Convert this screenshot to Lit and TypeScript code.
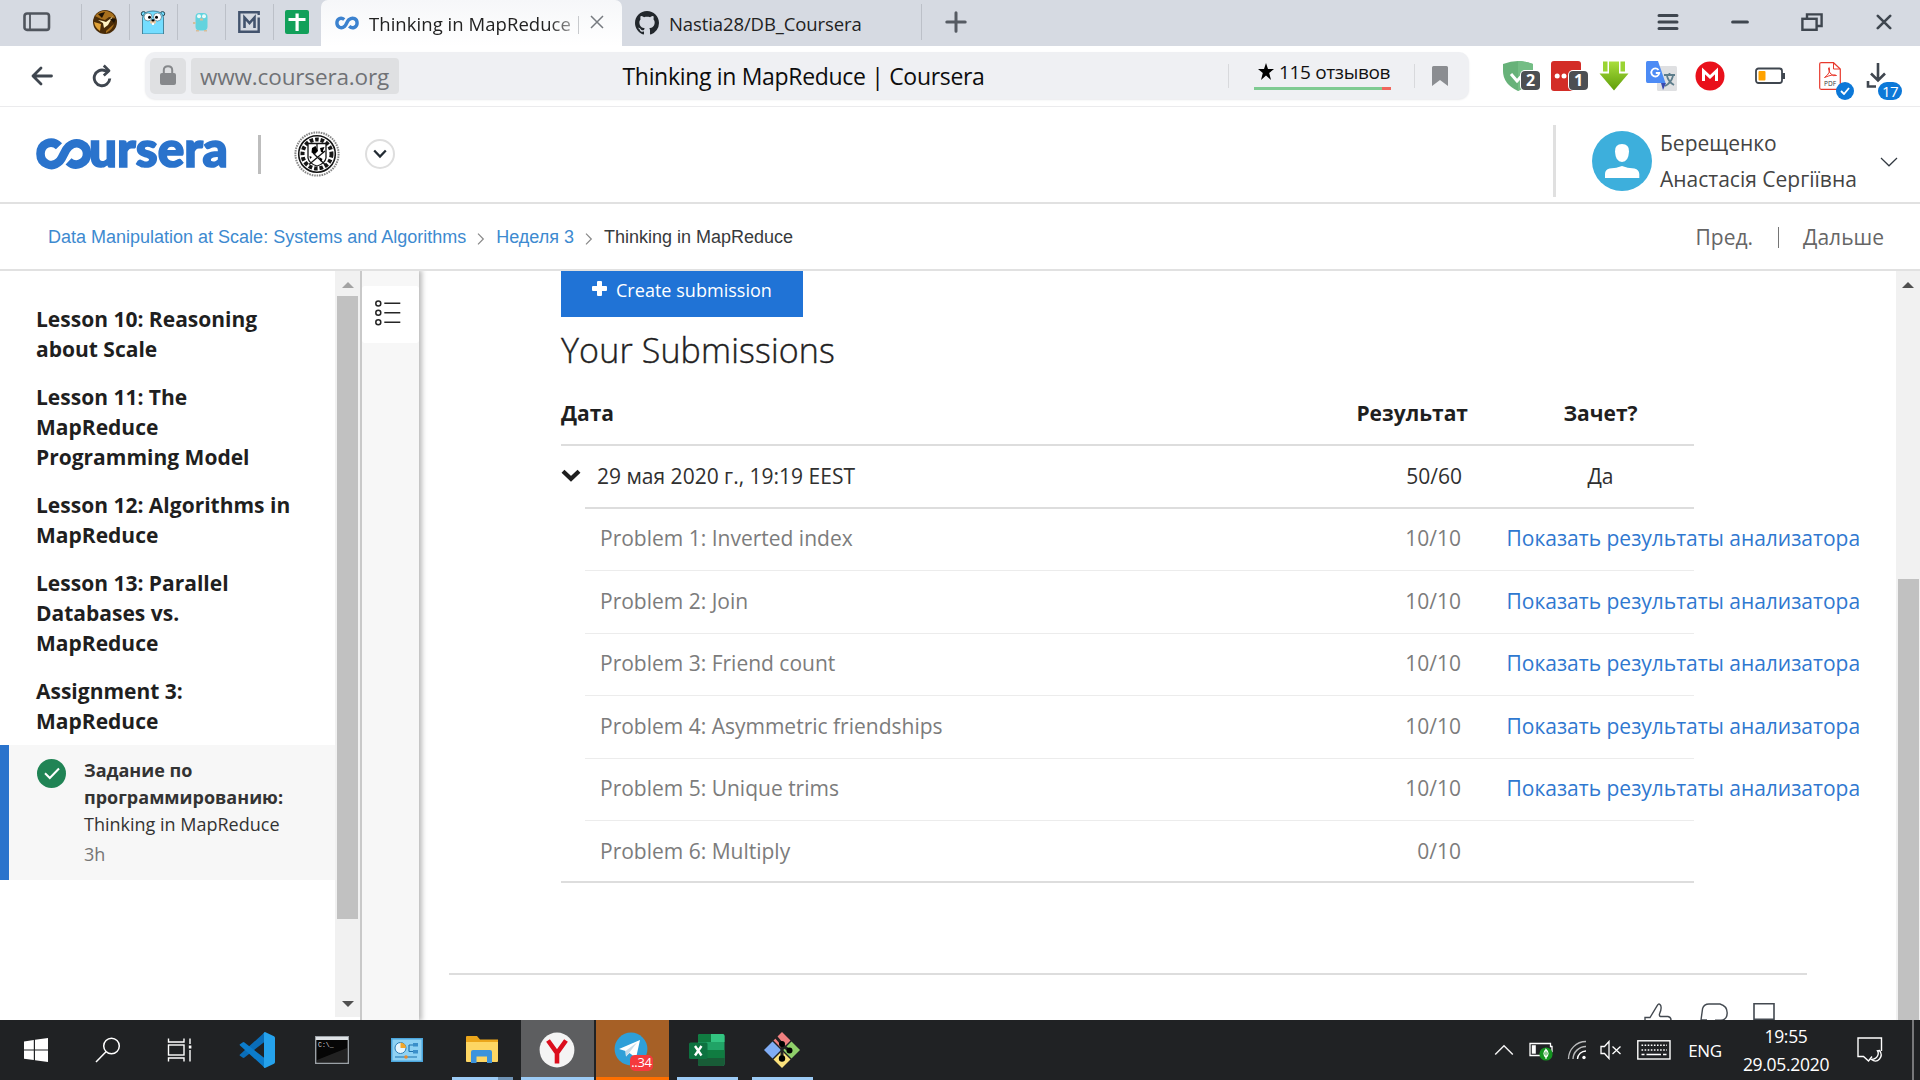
import { LitElement, html, css } from "lit";
import { customElement } from "lit/decorators.js";

/* ---------- icons ---------- */
const panelIcon = html`<svg width="28" height="20" viewBox="0 0 28 20" fill="none" stroke="#50555d" stroke-width="2.6"><rect x="1.5" y="1.5" width="24.5" height="16.4" rx="2.5"/><path d="M7 2v16" stroke-width="1.8"/></svg>`;
const emblemIcon = html`<svg width="24" height="24" viewBox="0 0 24 24"><circle cx="12" cy="12" r="12" fill="#4a2c08"/><path d="M2 6Q7 0 14 1Q21 3 22 8L16 7L12 10L8 9Z" fill="#a8701d"/><path d="M1 12L8 14L7 21Q2 18 1 12Z" fill="#e0a238"/><path d="M13 21L21 14Q20 19 13 23Z" fill="#a8701d"/><path d="M5 10L10 11L13 12L17 9L20 6L15 15L11 18L10 13Z" fill="#fff3c4"/><path d="M5 4L12 2L9 8Z" fill="#1d1205"/><path d="M17 9L23 9L21 13Z" fill="#1d1205"/></svg>`;
const gopherIcon = html`<svg width="26" height="24" viewBox="0 0 26 24"><circle cx="3.500" cy="3.800" r="2.200" fill="#74ddff" stroke="#26404a"/><circle cx="22.500" cy="3.800" r="2.200" fill="#74ddff" stroke="#26404a"/><path d="M2.500 24V8Q3 1 13 1T23.500 8V24Z" fill="#74ddff" stroke="#2d6f87" stroke-width=".8"/><circle cx="8" cy="7" r="4" fill="#fff" stroke="#35606e" stroke-width=".6"/><circle cx="17.5" cy="7" r="4" fill="#fff" stroke="#35606e" stroke-width=".6"/><circle cx="9.5" cy="7.2" r="1.5"/><circle cx="16.5" cy="7.2" r="1.5"/><ellipse cx="13" cy="12" rx="3" ry="2" fill="#e8c8a2"/><ellipse cx="13" cy="10.4" rx="1.6" ry="1.1"/><path d="M12 13h2v2h-2z" fill="#fff"/></svg>`;
const smallGopherIcon = html`<svg width="16" height="20" viewBox="0 0 16 20"><rect x="2.5" y="1" width="12" height="17.5" rx="4" fill="#63d3de"/><circle cx="6" cy="4.2" r="2" fill="#e9fafa"/><circle cx="11" cy="4.2" r="2" fill="#e9fafa"/><path d="M7 6.5h3v2H7z" fill="#d7bd98"/><path d="M0 10h2.5v2H0zM3 18h3v1.5H3zM11 18h3v1.5h-3z" fill="#d7bd98"/></svg>`;
const mIcon = html`<svg width="22" height="22" viewBox="0 0 22 22" fill="none" stroke="#43536d"><path d="M20.700 4V1.300H1.300V20.700H20.700V6.500" stroke-width="2.4"/><path d="M6.500 17V6.500L11.500 12L16.500 6.500V17" stroke-width="2.600"/></svg>`;
const crossDocIcon = html`<svg width="24" height="24" viewBox="0 0 24 24"><rect width="24" height="24" rx="2" fill="#12a05a"/><path d="M10.5 3.5h3.2V8h6.8v3h-6.8v10h-3.2V11H3.5V8h7z" fill="#fff"/></svg>`;
const infinityIcon = html`<svg width="24" height="14" viewBox="0 0 24 14" fill="none" stroke="#3c82cf" stroke-width="3.4"><path d="M9.3 3.5C5.500 .4 1.900 3.300 1.900 7S6 13.400 9.600 10.400C12 8 11.500 6 14 3.600C18 .5 22.100 3 22.100 7S17.500 13.500 14.200 10.200"/></svg>`;
const githubIcon = html`<svg width="24" height="24" viewBox="0 0 16 16" fill="#22272c"><path d="M8 0C3.580 0 0 3.580 0 8c0 3.540 2.290 6.530 5.470 7.590.4.070.55-.17.55-.38 0-.19-.01-.82-.01-1.490-2.010.37-2.530-.49-2.690-.94-.09-.23-.48-.94-.82-1.130-.28-.15-.68-.52-.01-.53.63-.01 1.080.58 1.230.82.72 1.210 1.870.87 2.330.66.070-.52.28-.87.51-1.070-1.780-.2-3.640-.89-3.640-3.950 0-.87.31-1.590.82-2.150-.08-.2-.36-1.020.08-2.120 0 0 .67-.21 2.200.82.64-.18 1.320-.27 2-.27s1.360.09 2 .27c1.530-1.040 2.200-.82 2.200-.82.44 1.100.16 1.920.08 2.120.51.56.82 1.270.82 2.150 0 3.070-1.870 3.750-3.650 3.950.29.25.54.73.54 1.480 0 1.070-.01 1.930-.01 2.200 0 .21.15.46.55.38A8.010 8.010 0 0016 8c0-4.420-3.580-8-8-8z"/></svg>`;
const plusIcon = html`<svg width="22" height="22" viewBox="0 0 22 22" stroke="#565b63" stroke-width="3" stroke-linecap="round"><path d="M11 1.800V20.200M1.800 11H20.200"/></svg>`;
const tabCloseIcon = html`<svg width="14" height="14" viewBox="0 0 14 14" stroke="#777b80" stroke-width="1.500"><path d="M1 1L13 13M13 1L1 13"/></svg>`;
const menuIcon = html`<svg width="22" height="18" viewBox="0 0 22 18" stroke="#3f464f" stroke-width="3" stroke-linecap="round"><path d="M2 2.500H20M2 9H20M2 15.500H20"/></svg>`;
const minIcon = html`<svg width="18" height="18" viewBox="0 0 18 18" stroke="#3f464f" stroke-width="3" stroke-linecap="round"><path d="M1.600 9H16.400"/></svg>`;
const restoreIcon = html`<svg width="22" height="18" viewBox="0 0 22 18" fill="none" stroke="#3f464f" stroke-width="2.400"><rect x="1.400" y="5.800" width="14.200" height="11"/><path d="M6 5.500V1.400H20.600V13H16"/></svg>`;
const winCloseIcon = html`<svg width="16" height="16" viewBox="0 0 16 16" stroke="#3f464f" stroke-width="2.600" stroke-linecap="round"><path d="M1.800 1.800L14.200 14.200M14.200 1.800L1.800 14.200"/></svg>`;
const backIcon = html`<svg width="22" height="20" viewBox="0 0 22 20" fill="none" stroke="#3f464f" stroke-width="2.800" stroke-linecap="round" stroke-linejoin="round"><path d="M20.500 10H2M10 2L2 10L10 18"/></svg>`;
const reloadIcon = html`<svg width="20" height="24" viewBox="0 0 20 24" fill="none" stroke="#3f464f" stroke-width="2.900" stroke-linejoin="round"><path d="M17.800 14.500A7.800 7.800 0 1 1 13 6.700H17"/><path d="M11.800 1.500L17 6.700L11.800 11.500" stroke-width="2.700"/></svg>`;
const lockIcon = html`<svg width="16" height="20" viewBox="0 0 16 20"><rect y="8" width="16" height="12" rx="2" fill="#86888b"/><path d="M3.800 9V5Q3.800 1.200 8 1.200T12.200 5V9" fill="none" stroke="#86888b" stroke-width="2"/></svg>`;
const starIcon = html`<svg width="16" height="17" viewBox="0 0 16 17"><path d="M8 0L10 6H16L11.200 10L13 17L8 12.600L3 17L4.800 10L0 6H6Z"/></svg>`;
const bookmarkIcon = html`<svg width="16" height="20" viewBox="0 0 16 20"><path d="M0 1.500Q0 0 1.500 0H14.500Q16 0 16 1.500V20L8 14L0 20Z" fill="#8b8d91"/></svg>`;
const shieldIcon = html`<svg width="30" height="30" viewBox="0 0 30 30"><path d="M0 3Q8 0 15 0T30 3V10Q30 23 15 30Q0 23 0 10Z" fill="#67b279"/><path d="M15 0Q22 0 30 3V10Q30 23 15 30Z" fill="#74bd85"/><path d="M8 13L14 20L23 10" fill="none" stroke="#fff" stroke-width="3"/></svg>`;
const lastpassIcon = html`<svg width="30" height="30" viewBox="0 0 30 30"><rect width="30" height="30" rx="3" fill="#d32d27"/><circle cx="6.200" cy="15" r="2.500" fill="#fff"/><circle cx="13" cy="15" r="2.500" fill="#fff"/></svg>`;
const saveFromIcon = html`<svg width="30" height="30" viewBox="0 0 30 30"><defs><linearGradient id="sf" x2="0" y2="1"><stop stop-color="#a9de3c"/><stop offset="1" stop-color="#5f9d0a"/></linearGradient></defs><path d="M10 .5H20V12.500H29.500L15 29.500L.5 12.500H10Z" fill="url(#sf)"/><path d="M4 .5H8.500V10.500H4zM21.500 .5H26V10.500H21.500z" fill="#9ad433"/></svg>`;
const translateIcon = html`<svg width="32" height="30" viewBox="0 0 32 30"><rect x="11" y="5" width="20" height="25" rx="1.500" fill="#dfe0e2"/><path d="M18 14H29M23.500 12V14M21 15Q22.500 21 28 24M27 15Q25 22 19 25" stroke="#5d7d8b" stroke-width="1.800" fill="none"/><path d="M1.500 0H12L19.500 22H1.500Q0 22 0 20V1.500Q0 0 1.500 0Z" fill="#4c8bf5"/><path d="M15 22H20L17 29Z" fill="#3a4ab0"/><path d="M12.500 9A4 4 0 1 0 13.300 12H9.800" fill="none" stroke="#fff" stroke-width="1.800"/></svg>`;
const megaIcon = html`<svg width="30" height="30" viewBox="0 0 30 30"><circle cx="15" cy="15" r="14.500" fill="#e9101b"/><path d="M8.500 20V10L15 16L21.500 10V20" fill="none" stroke="#fff" stroke-width="3"/></svg>`;
const batteryIcon = html`<svg width="30" height="18" viewBox="0 0 30 18"><rect x="1" y="1.500" width="26" height="14.500" rx="2.500" fill="none" stroke="#3f464f" stroke-width="1.800"/><path d="M27 6h3v6h-3z" fill="#3f464f"/><rect x="3.500" y="4" width="7" height="9.500" rx="1" fill="#ffa200"/></svg>`;
const pdfIcon = html`<svg width="22" height="28" viewBox="0 0 22 28"><path d="M1.500 .7H14.500L21.300 7V25.800Q21.300 27.300 19.800 27.300H2.200Q.7 27.300 .7 25.800V2Q.7 .7 2 .7Z" fill="#fff" stroke="#e8392d" stroke-width="1.200"/><path d="M14.500 1V7H21" fill="none" stroke="#e8392d"/><path d="M5.500 15.500Q12 11 10.200 5.500Q8.500 6 11 11Q14 15 17.500 13.500Q15 11.500 5.500 15.500Z" fill="none" stroke="#e8392d"/><text x="11" y="24" font-size="6.500" font-family="Open Sans, sans-serif" fill="#333" text-anchor="middle">PDF</text></svg>`;
const downloadIcon = html`<svg width="24" height="28" viewBox="0 0 24 28" fill="none" stroke="#3f464f" stroke-width="2.600"><path d="M12 1V18M5 11.500L12 18.500L19 11.500"/><path d="M2 19V24.500H10"/></svg>`;
const thinChevron = html`<svg width="18" height="10" viewBox="0 0 18 10" fill="none" stroke="#333a42" stroke-width="1.200"><path d="M1 1L9 8.800L17 1"/></svg>`;
const crumbArrow = html`<svg class="arrow" width="8" height="12" viewBox="0 0 8 12" fill="none" stroke="#888" stroke-width="1.200"><path d="M1 .7L6.300 6L1 11.300"/></svg>`;
const avatarIcon = html`<svg width="60" height="60" viewBox="0 0 60 60"><circle cx="30" cy="30" r="30" fill="#3dafdc"/><path d="M30 13Q37.300 13 37 20.500Q36.500 31 30 31T23 20.500Q22.700 13 30 13Z" fill="#fff"/><path d="M13 47V43Q13 38.500 17.500 37.500Q25 37 30 35Q35 37 42.500 37.500Q47 38.500 47.300 43V47Z" fill="#fff"/></svg>`;
const listIcon = html`<svg width="26" height="26" viewBox="0 0 26 26" fill="none" stroke="#252525" stroke-width="1.500"><circle cx="3.300" cy="3.500" r="2.500"/><circle cx="3.300" cy="12.700" r="2.500"/><circle cx="3.300" cy="22.200" r="2.500"/><path d="M9.300 3.300H25.300M9.300 12.700H25.300M9.300 22.200H25.300"/></svg>`;
const checkIcon = html`<svg width="30" height="30" viewBox="0 0 30 30"><circle cx="14.500" cy="14.500" r="14.500" fill="#208455"/><path d="M8 14.300L12.800 19L22 9.500" fill="none" stroke="#fff" stroke-width="2"/></svg>`;
const whitePlus = html`<svg width="15" height="15" viewBox="0 0 15 15" fill="#fff"><rect x="5" width="5" height="15" rx="1"/><rect y="5" width="15" height="5" rx="1"/></svg>`;
const boldChevron = html`<svg width="20" height="14" viewBox="0 0 20 14" fill="none" stroke="#1f1f1f" stroke-width="4.200"><path d="M2 2.200L10 9.800L18 2.200"/></svg>`;
const likeIcon = html`<svg width="28" height="30" viewBox="0 0 28 30" fill="none" stroke="#434950" stroke-width="1.400"><path d="M1 29V14.500H6L13.500 2.200Q14.500 .3 16 1.500Q18.500 4 15.500 11Q15 13 16.500 13.500H24Q27 14 27 17V29"/></svg>`;
const bubbleIcon = html`<svg width="28" height="30" viewBox="0 0 28 30" fill="none" stroke="#434950" stroke-width="1.400"><path d="M1 17L2.600 5.500Q4 1 9 1H20Q27.200 3 27.200 10Q27 17 21 17.200H15M1 17H7"/></svg>`;
const flagIcon = html`<svg width="22" height="30" viewBox="0 0 22 30" fill="none" stroke="#434950" stroke-width="1.600"><path d="M1 30V.8H21V16.200H1"/></svg>`;

const winIcon = html`<svg width="24" height="24" viewBox="0 0 24 24" fill="#fff"><path d="M0 3.500L9.800 2V11.500H0zM11 1.800L24 0V11.500H11zM0 12.600H9.800V22L0 20.700zM11 12.600H24V24L11 22.200z"/></svg>`;
const searchIcon = html`<svg width="26" height="26" viewBox="0 0 26 26" fill="none" stroke="#fff" stroke-width="1.500"><circle cx="16.500" cy="9" r="7.800"/><path d="M11 14.800L1 25"/></svg>`;
const taskViewIcon = html`<svg width="26" height="24" viewBox="0 0 26 24" fill="none" stroke="#fff" stroke-width="1.400"><path d="M1.500 .5V4H17V.5M1.500 23.500V20H17V23.500M23 .5V6M23 12V23.500"/><rect x="1.500" y="7" width="15.500" height="10"/><path d="M21.800 7.500h2.600v3h-2.600z" fill="#fff" stroke="none"/></svg>`;
const codeIcon = html`<svg width="36" height="36" viewBox="0 0 36 36"><path d="M1 22.500L26 0V9.500L5.500 25.500Q4.500 26.300 3.500 25.500L1 23.800Q.2 23.200 1 22.500Z" fill="#0a6db8"/><path d="M1 13.500L26 36V26.500L5.500 10.500Q4.500 9.700 3.500 10.500L1 12.200Q.2 12.800 1 13.500Z" fill="#0c7ccb"/><path d="M26 0L35 4.200Q36 4.700 36 6V30Q36 31.300 35 31.800L26 36Q24 35.500 25 33V3Q24 .5 26 0Z" fill="#25a2ec"/></svg>`;
const cmdIcon = html`<svg width="34" height="28" viewBox="0 0 34 28"><rect x=".7" y=".7" width="32.600" height="26.600" fill="#060606" stroke="#9ba1a6" stroke-width="1.400"/><rect x="1" y="1" width="32" height="3" fill="#dfe3e6"/><path d="M2 24L32 12V26H2z" fill="#222"/><text x="3" y="11" font-size="6.500" fill="#ddd" font-family="Liberation Mono, monospace">C:\\_</text></svg>`;
const panelCtlIcon = html`<svg width="32" height="24" viewBox="0 0 32 24"><rect width="32" height="24" fill="#4ba6dc"/><rect x="1.500" y="1.500" width="29" height="21" fill="#8fd2f4"/><circle cx="9.500" cy="10" r="5.500" fill="#e6f5fd" stroke="#2c7db4"/><path d="M9.500 10V4.500A5.500 5.500 0 0 1 15 10z" fill="#f3a72b"/><path d="M22 5h5v3.500h-5zM22 12h5v3.500h-5z" fill="#3b8fca"/><path d="M18 7h4M18 13.500h4M18 7v6.500M4 19H26" stroke="#1f72ae" stroke-width="1.200" fill="none"/><circle cx="15" cy="19" r="1.800" fill="#e8892b"/></svg>`;
const explorerIcon = html`<svg width="34" height="28" viewBox="0 0 34 28"><path d="M1 1Q1 0 2 0H12L15 3.500H33V24H1z" fill="#eba61b"/><path d="M1 6H33V25Q33 26 32 26H2Q1 26 1 25z" fill="#fdd663"/><path d="M6 16Q6 14 8 14H25Q27 14 27 16V27H22V20.500H11.500V27H6z" fill="#3b93dc"/></svg>`;
const yandexIcon = html`<svg width="36" height="36" viewBox="0 0 36 36"><circle cx="18" cy="18" r="17.400" fill="#f4f4f4"/><path d="M9 8.500L18 21L27 8.500M18 20V31.500" fill="none" stroke="#dc0e1d" stroke-width="4.600"/></svg>`;
const telegramIcon = html`<svg width="38" height="38" viewBox="0 0 38 38"><circle cx="18" cy="18" r="16.400" fill="#2f9fd8"/><path d="M6 18L27 9L23 27L16.500 22L13 25.500L12.500 20Z" fill="#fff"/><path d="M12.500 20L24 11.500L16 22L13 25.500Z" fill="#c8dbe9"/></svg>`;
const excelIcon = html`<svg width="36" height="32" viewBox="0 0 36 32"><rect x="9" width="26.500" height="32" rx="2" fill="#21a366"/><path d="M9 8H22V0H11Q9 0 9 2zM9 16h13v8H9z" fill="#107c41"/><path d="M22 0H33.500Q35.500 0 35.500 2V8H22z" fill="#33c481"/><path d="M22 16h13.500v8H22z" fill="#107c41"/><path d="M9 24h26.500v6q0 2-2 2H11q-2 0-2-2z" fill="#185c37"/><rect y="8.500" width="18.500" height="16.500" rx="1.500" fill="#0d7240"/><path d="M6 12L12.500 21.500M12.500 12L6 21.500" stroke="#fff" stroke-width="2.400"/></svg>`;
const gitIcon = html`<svg width="36" height="36" viewBox="0 0 36 36"><path d="M18 0L26.500 8.500L18 17L9.500 8.500Z" fill="#f08080"/><path d="M27.500 9.500L36 18L27.500 26.500L19 18Z" fill="#8fd06a"/><path d="M8.500 9.500L17 18L8.500 26.500L0 18Z" fill="#80adf5"/><path d="M18 19L26.500 27.500L18 36L9.500 27.500Z" fill="#fbe27c"/><path d="M12 5L18 12V27M18 13L26 19" fill="none" stroke="#222" stroke-width="3"/><circle cx="18" cy="12" r="3"/><circle cx="18" cy="26.500" r="3.200"/><circle cx="25.500" cy="18.500" r="3"/></svg>`;

const caretUp = html`<svg width="20" height="12" viewBox="0 0 20 12" fill="none" stroke="#f2f2f2" stroke-width="1.500"><path d="M1.200 10.500L10 1.800L18.800 10.500"/></svg>`;
const trayBattery = html`<svg width="24" height="22" viewBox="0 0 24 22"><path d="M1 4.500H21.500V7.500H23V12.500H21.500V16.500H1z" fill="none" stroke="#fff" stroke-width="1.300"/><path d="M2.800 6.200h4v8.500h-4z" fill="#fff"/><circle cx="17" cy="15" r="6.600" fill="#149420"/><path d="M17 10.500Q12.800 14.500 17 18.500Q21.200 14.500 17 10.500V20" fill="none" stroke="#fff" stroke-width="1.100"/></svg>`;
const wifiIcon = html`<svg width="20" height="20" viewBox="0 0 20 20" fill="none" stroke="#b9babb" stroke-width="1.400"><path d="M1.500 19A17.500 17.500 0 0 1 19 1.500"/><path d="M6 19A13 13 0 0 1 19 6.500"/><path d="M10.500 19A8.500 8.500 0 0 1 19 11" stroke="#fff"/><circle cx="17" cy="17.500" r="1.700" fill="#fff" stroke="none"/></svg>`;
const muteIcon = html`<svg width="22" height="20" viewBox="0 0 22 20" fill="none" stroke="#fff" stroke-width="1.300"><path d="M1 6.500H4.500L9 1.500V18.500L4.500 13.500H1z"/><path d="M12.500 6.500L20.500 14M20.500 6.500L12.500 14"/></svg>`;
const keyboardIcon = html`<svg width="34" height="20" viewBox="0 0 34 20" fill="none" stroke="#fff" stroke-width="1.400"><rect x=".8" y=".8" width="32.200" height="18.200"/><path d="M4.500 5.200H30M4.500 10H30" stroke-dasharray="1.600 1.500"/><path d="M4.500 14.500H7.500M9.500 14.500H24M26 14.500H29.500"/></svg>`;
const noticeIcon = html`<svg width="26" height="26" viewBox="0 0 26 26" fill="none" stroke="#fff" stroke-width="1.400"><path d="M15 19.500L11.500 24L6.500 19.500H1V1H24.500V14"/><path d="M22.500 13.500Q26 18 22.500 22T14.500 22.500Q19 22 20.500 19T20.500 13.800Z"/></svg>`;

/* Round seal of the university shown next to the wordmark. */
const sealIcon = html`<svg width="46" height="46" viewBox="0 0 46 46"><circle cx="23" cy="23" r="21.600" fill="none" stroke="#888" stroke-width="2" stroke-dasharray="1.600 .9"/><circle cx="23" cy="23" r="18.300" fill="#fff" stroke="#161616" stroke-width="1.600"/><circle cx="23" cy="23" r="14.500" fill="none" stroke="#161616" stroke-width="4" stroke-dasharray="3.600 1.900"/><path d="M14 12.500H32V27Q31 32.500 23 35Q15 32.500 14 27Z" fill="#fff" stroke="#161616" stroke-width="1.300"/><path d="M15 33.500L31 20M31 33.500L19 22M23 13V20" stroke="#161616" stroke-width="1.300"/><path d="M17.500 21.500L18 17L21.500 15L24 20L21 23zM26 17L30.500 16L29 19.500L30 22L27 21zM15.500 25L18 26L16 28zM25 26L28.500 28L27 31z"/></svg>`;

const wordmark = html`<svg width="194" height="34" viewBox="0 0 194 34" overflow="visible"><path d="M23 9.500C15.500 2 4.500 7 4.500 17S16 32 23.500 24.500C28 19.500 28 14 33 9.500C41 3 51 8 51 17S40 31.500 32.500 24.500" transform="translate(0 -1.200)" fill="none" stroke="#2a73cc" stroke-width="8.600"/><text x="53" y="28.800" font-family="Lato, sans-serif" font-weight="900" font-size="50" fill="#2a73cc" stroke="#2a73cc" stroke-width="1.700" textLength="139" lengthAdjust="spacingAndGlyphs">ursera</text></svg>`;

const LESSONS = [
  ["Lesson 10: Reasoning", "about Scale"],
  ["Lesson 11: The", "MapReduce", "Programming Model"],
  ["Lesson 12: Algorithms in", "MapReduce"],
  ["Lesson 13: Parallel", "Databases vs.", "MapReduce"],
  ["Assignment 3:", "MapReduce"],
];

const PROBLEMS = [
  { name: "Problem 1: Inverted index", score: "10/10", link: true },
  { name: "Problem 2: Join", score: "10/10", link: true },
  { name: "Problem 3: Friend count", score: "10/10", link: true },
  { name: "Problem 4: Asymmetric friendships", score: "10/10", link: true },
  { name: "Problem 5: Unique trims", score: "10/10", link: true },
  { name: "Problem 6: Multiply", score: "0/10", link: false },
];

const base = css`
  * { box-sizing: border-box; }
  svg { display: block; flex: none; }
`;

@customElement("browser-chrome")
export class BrowserChrome extends LitElement {
  static styles = [base, css`
    :host { display: block; font-family: "Open Sans", sans-serif; flex: none; height: 107px; border-bottom: 1px solid #ebebed; background: #fff; }
    .tabs { display: flex; height: 46px; background: #d6dae2; }
    .cell { display: flex; align-items: center; justify-content: center; width: 48px; height: 44px; flex: none; }
    .cell.first { width: 81px; padding-right: 8px; }
    .cell.new { width: 92px; padding-right: 22px; }
    .cell.win { width: 72px; }
    .sep { border-left: 1px solid #bcc0c8; height: 36px; margin-top: 4px; width: 0; margin-right: -1px; flex: none; }
    .tab { display: flex; align-items: center; height: 46px; font-size: 18.5px; color: #222; white-space: nowrap; }
    .active { width: 301px; background: linear-gradient(#f6f7f9, #fff); border-radius: 7px 7px 0 0; padding-left: 14px; letter-spacing: .05px; }
    .label { width: 204px; flex: none; margin-left: 10px; -webkit-mask-image: linear-gradient(90deg, #000 88%, rgba(0,0,0,.4)); }
    .tab .bar { width: 1px; height: 18px; background: #c8cacd; margin: 4px 11px 0 5px; }
    .other { width: 299px; padding-left: 13px; letter-spacing: -0.100px; }
    .other span { margin-left: 10px; }
    .active svg:last-child { margin-top: -2px; }
    .spacer { flex: 1; }
    .tools { display: flex; height: 60px; padding-right: 18px; align-items: flex-start; }
    .nav { display: flex; align-items: center; width: 145px; height: 60px; padding-left: 31px; }
    .nav svg + svg { margin-left: 39px; }
    .field { display: flex; align-items: center; width: 1324px; height: 47px; margin-top: 6px; background: #eff0f3; border-radius: 10px; padding-left: 5px; box-shadow: 0 1px 2px #e9eaec; }
    .lock { width: 36px; height: 36px; border-radius: 5px; background: #dfe0e2; display: flex; justify-content: center; align-items: center; padding-bottom: 2px; }
    .url { width: 208px; height: 36px; margin-left: 5px; border-radius: 4px; background: #dfe0e2; color: #707276; font-size: 22.500px; line-height: 38px; padding-left: 9px; letter-spacing: -0.15px; }
    .title { margin-left: 223.500px; width: 605.500px; font-size: 23px; line-height: 36px; padding-top: 1px; letter-spacing: -0.320px; color: #0d0d0d; white-space: nowrap; }
    .line { width: 1px; height: 24px; background: #d8d9dc; }
    .reviews { width: 137px; margin: 0 23px 0 25px; height: 29px; margin-top: -1px; border-bottom: 3px solid #7fcb92; border-image: linear-gradient(90deg, #7fcb92 93%, #f0665c 93%) 1; display: flex; align-items: center; padding: 0 0 4px 4px; font-size: 19px; white-space: nowrap; letter-spacing: -0.35px; color: #111; }
    .reviews span { margin-left: 5px; }
    .mark { margin-left: 17px; }
    .ext { position: relative; display: flex; width: 48px; height: 60px; align-items: center; justify-content: center; }
    .ext.wide { width: 72px; }
    .exts { display: flex; margin-left: 25px; }
    .count { position: absolute; right: 2px; bottom: 16px; min-width: 19px; height: 19px; border-radius: 4px; background: #4c4f53; color: #fff; font-size: 16px; font-weight: 700; line-height: 18px; text-align: center; box-shadow: 0 0 0 1px #fff; }
    .tick, .seventeen { position: absolute; border-radius: 10px; background: #0c78d8; color: #fff; height: 18px; bottom: 6px; display: flex; align-items: center; justify-content: center; font-size: 15px; }
    .tick { width: 18px; right: 0; }
    .seventeen { width: 24px; right: 0; letter-spacing: -0.5px; }
  `];
  render() {
    return html`
      <div class="tabs">
        <div class="cell first">${panelIcon}</div>
        ${[emblemIcon, gopherIcon, smallGopherIcon, mIcon, crossDocIcon].map((i) => html`<div class="sep"></div><div class="cell">${i}</div>`)}
        <div class="tab active">${infinityIcon}<span class="label">Thinking in MapReduce</span><i class="bar"></i>${tabCloseIcon}</div>
        <div class="tab other">${githubIcon}<span>Nastia28/DB_Coursera</span></div>
        <div class="sep"></div>
        <div class="cell new">${plusIcon}</div>
        <div class="spacer"></div>
        ${[menuIcon, minIcon, restoreIcon, winCloseIcon].map((i) => html`<div class="cell win">${i}</div>`)}
      </div>
      <div class="tools">
        <div class="nav">${backIcon}${reloadIcon}</div>
        <div class="field">
          <div class="lock">${lockIcon}</div>
          <div class="url">www.coursera.org</div>
          <div class="title">Thinking in MapReduce | Coursera</div>
          <div class="line"></div>
          <div class="reviews">${starIcon}<span>115 отзывов</span></div>
          <div class="line"></div>
          <div class="mark">${bookmarkIcon}</div>
        </div>
        <div class="exts">
          <div class="ext">${shieldIcon}<span class="count">2</span></div>
          <div class="ext">${lastpassIcon}<span class="count">1</span></div>
          <div class="ext">${saveFromIcon}</div>
          <div class="ext">${translateIcon}</div>
          <div class="ext">${megaIcon}</div>
          <div class="ext wide">${batteryIcon}</div>
          <div class="ext">${pdfIcon}<span class="tick"><svg width="10" height="8" viewBox="0 0 10 8" fill="none" stroke="#fff" stroke-width="1.800"><path d="M1 4L4 7L9 1"/></svg></span></div>
          <div class="ext">${downloadIcon}<span class="seventeen">17</span></div>
        </div>
      </div>`;
  }
}

@customElement("site-header")
export class SiteHeader extends LitElement {
  static styles = [base, css`
    :host { display: block; flex: none; font-family: "Open Sans", sans-serif; }
    .top { display: flex; align-items: center; height: 97px; border-bottom: 2px solid #e1e1e1; padding: 0 22px 0 36px; }
    .rule { width: 3px; height: 39px; background: #bdbdbd; margin: 0 33px 0 28px; }
    .seal { margin-top: -1px; }
    .drop { width: 30px; height: 30px; border: 2px solid #dedede; border-radius: 50%; display: flex; align-items: center; justify-content: center; margin: -1px 0 0 25px; }
    .grow { flex: 1; }
    .vr { width: 3px; height: 72px; background: #e0e0e0; margin: 12px 36px 0 0; }
    .avatar { margin-top: 12px; }
    .name { width: 220px; margin-left: 8px; margin-top: 13px; font-size: 21px; line-height: 36px; color: #444; white-space: nowrap; }
    .name + svg { margin-top: 14px; }
    .crumbs { display: flex; align-items: center; height: 67px; border-bottom: 2px solid #e1e1e1; padding: 2px 36px 0 48px; font-family: "Liberation Sans", sans-serif; font-size: 18px; color: #373a3c; white-space: nowrap; }
    .link { color: #3d8ad0; }
    .link + .arrow { margin: 2px 11.500px 0 10.500px; }
    .step { font: 400 21px/30px "Open Sans", sans-serif; color: #666; margin-top: -1px; }
    .div { width: 1px; height: 21px; background: #757575; margin: 0 24px 0 25px; }
  `];
  render() {
    return html`
      <div class="top">
        ${wordmark}<div class="rule"></div><div class="seal">${sealIcon}</div>
        <div class="drop"><svg width="14" height="10" viewBox="0 0 14 10" fill="none" stroke="#222b33" stroke-width="2.300"><path d="M1.200 1.500L7 7.500L12.800 1.500"/></svg></div>
        <div class="grow"></div>
        <div class="vr"></div>
        <div class="avatar">${avatarIcon}</div>
        <div class="name">Берещенко<br />Анастасія Сергіївна</div>
        ${thinChevron}
      </div>
      <div class="crumbs">
        <span class="link">Data Manipulation at Scale: Systems and Algorithms</span>${crumbArrow}
        <span class="link">Неделя 3</span>${crumbArrow}
        <span>Thinking in MapReduce</span>
        <div class="grow"></div>
        <span class="step">Пред.</span><div class="div"></div><span class="step">Дальше</span>
      </div>`;
  }
}

@customElement("lesson-nav")
export class LessonNav extends LitElement {
  static styles = [base, css`
    :host { display: flex; flex: none; width: 419px; height: 749px; font-family: "Open Sans", sans-serif; background: #fff; box-shadow: 2px 0 5px 1px #bbb; clip-path: inset(0 -10px 0 0); z-index: 1; }
    .list { width: 335px; padding-top: 33px; }
    .lesson { padding-left: 36px; margin-bottom: 18px; font-size: 21px; line-height: 30px; font-weight: 700; color: #1f1f1f; white-space: nowrap; }
    .item { display: flex; height: 135px; margin-top: -9.500px; border-left: 9px solid #2a73cc; background: #f7f7f7; padding: 11.500px 0 0 27.500px; font-size: 18px; line-height: 27px; color: #333; }
    .item svg { margin-top: 2.500px; }
    .text { margin-left: 17.500px; padding-top: 1px; white-space: nowrap; }
    .text b { font-weight: 700; }
    .time { color: #757575; margin-top: 3px; }
    .scroll { width: 25px; height: 746px; background: #f1f1f1; display: flex; flex-direction: column; align-items: center; }
    .thumb { width: 21px; height: 623px; background: #c1c1c1; margin: 8px 0 82px; }
    .up, .down { width: 0; height: 0; border: 6px solid transparent; }
    .up { border-bottom-color: #a3a3a3; border-top-width: 0; margin-top: 11px; }
    .down { border-top-color: #505050; border-bottom-width: 0; }
    .rail { width: 59px; border-left: 2px solid #c9c9c9; background: #f7f7f7; padding-top: 15px; }
    .box { height: 57px; background: #fff; border-radius: 3px; padding: 14px 0 0 13px; }
  `];
  render() {
    return html`
      <div class="list">
        ${LESSONS.map((l) => html`<div class="lesson">${l.map((t) => html`<div>${t}</div>`)}</div>`)}
        <div class="item">${checkIcon}
          <div class="text"><b>Задание по<br />программированию:</b><br />Thinking in MapReduce<div class="time">3h</div></div>
        </div>
      </div>
      <div class="scroll"><div class="up"></div><div class="thumb"></div><div class="down"></div></div>
      <div class="rail"><div class="box">${listIcon}</div></div>`;
  }
}

@customElement("submission-view")
export class SubmissionView extends LitElement {
  static styles = [base, css`
    :host { display: flex; flex: 1; height: 749px; font-family: "Open Sans", sans-serif; overflow: hidden; background: #fff; }
    .page { flex: 1; min-width: 0; }
    .col { margin-left: 142px; width: 1133px; }
    .btn { width: 242px; height: 46px; background: #2073d6; color: #fff; display: flex; padding: 10px 0 0 31px; font-size: 18px; line-height: 15px; white-space: nowrap; }
    .btn span { margin-left: 9px; margin-top: 2px; letter-spacing: 0.03px; }
    h2 { margin: 9.500px 0 0; font-size: 34px; line-height: 46px; font-weight: 300; color: #1f1f1f; letter-spacing: .14px; -webkit-text-stroke: .4px #1f1f1f; }
    .row { display: flex; font-size: 21px; line-height: 30px; color: #303030; white-space: nowrap; border-bottom: 2px solid #ddd; }
    .head { height: 73px; padding-top: 25.500px; font-weight: 700; color: #1f1f1f; }
    .head .b { width: 907px; text-align: right; }
    .a { width: 0; }
    .c { text-align: center; }
    .head .c { margin-left: 51px; width: 163px; }
    .date { height: 63px; margin-left: 24px; padding-top: 15.500px; }
    .date .a { display: flex; align-items: center; height: 30px; margin-left: -24px; gap: 16px; }
    .date .b { width: 901px; text-align: right; }
    .date .c { margin-left: 57.500px; width: 162px; }
    .prob { height: 62.500px; margin-left: 24px; padding-top: 14.500px; color: #7c7c7c; border-bottom: 1px solid #ececec; }
    .prob .a { margin-left: 15px; }
    .prob .b { width: 861px; text-align: right; }
    .prob .d { margin-left: 45.500px; width: 0; color: #2f78d0; }
    .prob.plast { border-bottom: 0; height: 60px; }
    .end { height: 2px; background: #ddd; }
    .foot { margin: 90px 0 0 30px; width: 1358px; border-top: 2px solid #ddd; padding: 28px 32px 0 0; display: flex; justify-content: flex-end; gap: 28px; }
    .foot svg:nth-child(2) { margin-right: -3px; }
    .scroll { width: 24px; background: #f1f1f1; display: flex; flex-direction: column; align-items: center; }
    .up { width: 0; height: 0; border: 6px solid transparent; border-bottom-color: #505050; border-top-width: 0; margin: 11px 0 0; }
    .thumb { width: 21px; flex: 1; background: #c1c1c1; margin-top: 291px; }
  `];
  render() {
    return html`
      <div class="page">
        <div class="col">
          <div class="btn">${whitePlus}<span>Create submission</span></div>
          <h2>Your Submissions</h2>
          <div class="row head"><div class="a">Дата</div><div class="b">Результат</div><div class="c">Зачет?</div></div>
          <div class="row date"><div class="a">${boldChevron}<span>29 мая 2020 г., 19:19 EEST</span></div><div class="b">50/60</div><div class="c">Да</div></div>
          ${PROBLEMS.map((p) => html`<div class="row prob ${p.link ? "" : "plast"}"><div class="a">${p.name}</div><div class="b">${p.score}</div>${p.link ? html`<div class="d">Показать результаты анализатора</div>` : ""}</div>`)}
          <div class="end"></div>
        </div>
        <div class="foot">${likeIcon}${bubbleIcon}${flagIcon}</div>
      </div>
      <div class="scroll"><div class="up"></div><div class="thumb"></div></div>`;
  }
}

@customElement("task-bar")
export class TaskBar extends LitElement {
  static styles = [base, css`
    :host { display: flex; flex: none; height: 60px; background: #202224; color: #fff; font-family: "Open Sans", sans-serif; position: relative; z-index: 2; }
    .sys { width: 72px; display: flex; align-items: center; justify-content: center; }
    .apps { display: flex; gap: 2px; padding-left: 5px; }
    .app { position: relative; width: 73px; display: flex; align-items: center; justify-content: center; padding-right: 2px; }
    .run::after { content: ""; position: absolute; left: 6px; right: 6px; bottom: 0; height: 3px; background: #9ccbf5; }
    .multi::after { background: linear-gradient(90deg, #9ccbf5 76%, #6f93b5 76%); }
    .on { background: #5d5e60; }
    .run.on::after { left: 0; right: 0; }
    .alert { background: #a66026; }
    .run.alert::after { left: 0; right: 0; background: #ff6f00; }
    .n { position: absolute; left: 34px; bottom: 9px; width: 23px; height: 16px; border-radius: 5px; background: #f5393d; font-size: 13px; line-height: 15px; text-align: center; letter-spacing: -0.3px; }
    .grow { flex: 1; }
    .t { display: flex; align-items: center; justify-content: center; font-size: 17px; letter-spacing: -0.3px; }
    .clock { width: 108px; text-align: center; font-size: 17.500px; line-height: 28px; padding-top: 2px; letter-spacing: -0.3px; white-space: nowrap; }
    .edge { width: 2px; background: #77787a; margin: 0 6px 0 12px; }
    .w36 { width: 36px; } .w38 { width: 38px; } .w34 { width: 34px; } .w51 { width: 51px; } .w53 { width: 53px; padding-right: 1px; } .w60 { width: 60px; }
  `];
  render() {
    return html`
      <div class="sys">${winIcon}</div><div class="sys">${searchIcon}</div><div class="sys">${taskViewIcon}</div>
      <div class="apps">
        <div class="app">${codeIcon}</div><div class="app">${cmdIcon}</div><div class="app">${panelCtlIcon}</div>
        <div class="app run multi">${explorerIcon}</div><div class="app run on">${yandexIcon}</div>
        <div class="app run alert">${telegramIcon}<span class="n">..34</span></div>
        <div class="app run">${excelIcon}</div><div class="app run">${gitIcon}</div>
      </div>
      <div class="grow"></div>
      <div class="t w36">${caretUp}</div><div class="t w38">${trayBattery}</div><div class="t w34">${wifiIcon}</div>
      <div class="t w34">${muteIcon}</div><div class="t w51">${keyboardIcon}</div><div class="t w53">ENG</div>
      <div class="clock">19:55<br />29.05.2020</div>
      <div class="t w60">${noticeIcon}</div><div class="edge"></div>`;
  }
}

@customElement("app-root")
export class AppRoot extends LitElement {
  static styles = [base, css`
    :host { display: flex; flex-direction: column; width: 1920px; height: 1080px; overflow: hidden; background: #fff; }
    .body { display: flex; height: 749px; flex: none; }
  `];
  render() {
    return html`<browser-chrome></browser-chrome><site-header></site-header>
      <div class="body"><lesson-nav></lesson-nav><submission-view></submission-view></div>
      <task-bar></task-bar>`;
  }
}
